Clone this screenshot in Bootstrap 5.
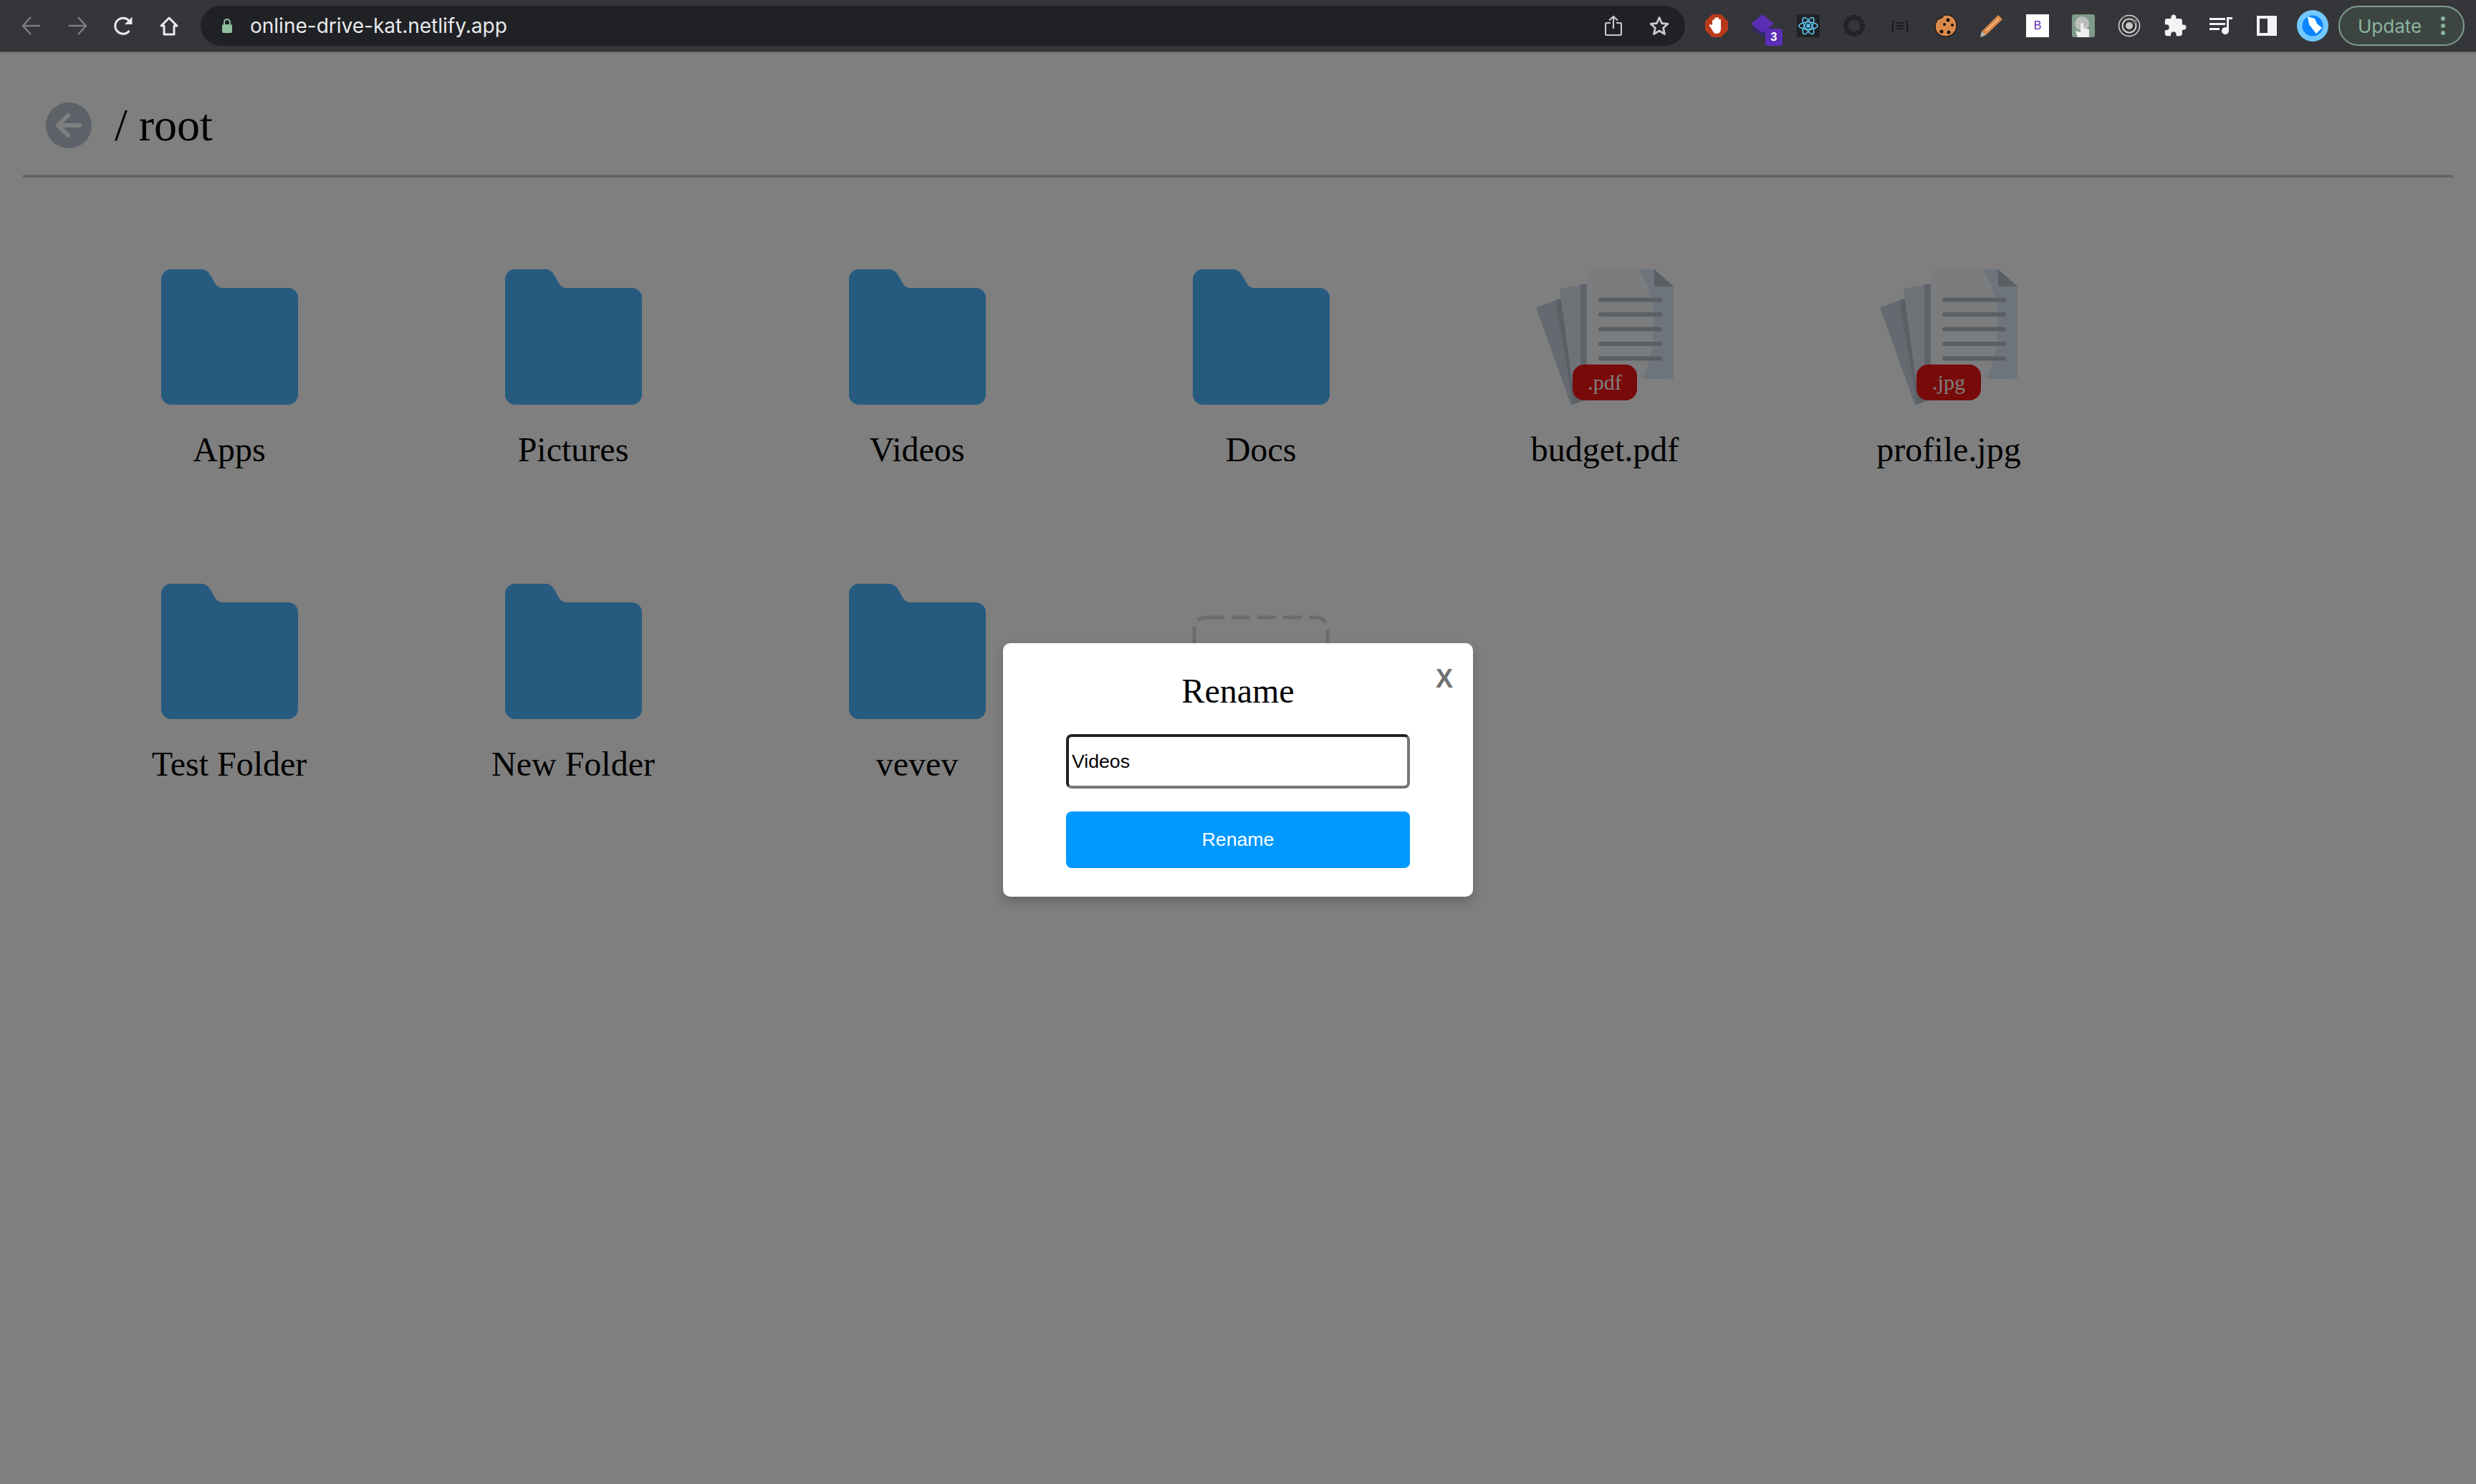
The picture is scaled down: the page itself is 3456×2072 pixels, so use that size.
<!DOCTYPE html>
<html lang="en">
<head>
  <meta charset="UTF-8" />
  <meta name="viewport" content="width=device-width, initial-scale=1.0"/>
  <title>Online Drive</title>
  <link href="https://cdn.jsdelivr.net/npm/bootstrap@5.3.3/dist/css/bootstrap.min.css" rel="stylesheet" />
  <style>
    html, body { height: 100%; }
    body { background: #fff; color: #000; font-family: "Liberation Serif", serif; overflow: hidden; }

    /* browser chrome */
    .chrome-bar { height: 74px; background: #35363a; border-bottom: 2px solid #6a6b6c; padding-left: 12px; padding-right: 16px; }
    .slot { width: 64px; height: 72px; flex: none; position: relative; }
    .slot-inner { height: 56px; }
    .address { flex: 1; height: 56px; margin: 0 12px; background: #202124; border-radius: 28px; padding-left: 29px; padding-right: 4px; }
    .url { font-family: Inter, sans-serif; font-size: 28px; color: #e8eaed; margin-left: 24px; }
    .ext-count { position: absolute; left: 36px; top: 40px; width: 24px; height: 24px; border-radius: 4px; background: #5b2db5; color: #fff; font: bold 16px/24px "Liberation Sans", sans-serif; text-align: center; }
    .ext-b { width: 32px; height: 32px; background: #fff; color: #5b2db5; font: 16px/32px "Liberation Sans", sans-serif; text-align: center; }
    .update-pill { width: 176px; height: 56px; margin-left: 4px; flex: none; border: 2px solid #7f9f8f; border-radius: 28px; background: #3c4542; color: #8ab59d; font: 26px Inter, sans-serif; padding-left: 25px; padding-right: 25px; }
    .dots { display: flex; flex-direction: column; gap: 4px; }
    .dots i { display: block; width: 6px; height: 6px; border-radius: 50%; background: #8ab59d; }

    /* page */
    .path-head { height: 174px; margin: 0 32px; padding: 69px 0 0 32px; border-bottom: 4px solid #ccc; gap: 32px; }
    .back-btn { width: 64px; height: 64px; flex: none; }
    .path-text { font-size: 64px; line-height: 64px; }
    .drive-grid { display: grid; grid-template-columns: repeat(6, 480px); grid-auto-rows: 439px; margin: 128px 0 0 80px; }
    .drive-item { position: relative; }
    .drive-icon { display: block; width: 192px; height: 190px; }
    .drive-name { font-size: 48px; line-height: 56px; margin-top: 34px; }
    .ext-tag { position: absolute; left: 195px; top: 133px; width: 90px; height: 50px; border-radius: 16px; background: #f01414; color: #fff; font-size: 30px; line-height: 50px; text-align: center; }

    /* modal */
    .dim-layer { position: absolute; left: 0; right: 0; top: 74px; bottom: 0; background: rgba(0, 0, 0, .5); padding-top: 4px; }
    .rename-box { position: relative; width: 656px; height: 354px; background: #fff; border-radius: 10px; padding: 0 88px; box-shadow: 0 8px 16px rgba(0, 0, 0, .2); }
    .rename-title { font-size: 48px; line-height: 56px; margin: 39px 0 32px; font-weight: 400; }
    .rename-input { display: block; width: 100%; height: 76px; padding: 0 4px; font: 26.67px "Liberation Sans", sans-serif; color: #000; border: 4px solid; border-color: #222 #767676 #767676 #222; border-radius: 8px; outline: none; }
    .rename-btn { display: block; width: 100%; height: 79px; margin-top: 32px; background: #09f; color: #fff; border: 0; border-radius: 8px; font: 26.67px "Liberation Sans", sans-serif; }
    .rename-close { position: absolute; top: 28px; right: 28px; font: bold 36px/44px "Liberation Sans", sans-serif; color: #707070; }
  </style>
</head>
<body>

  <!-- hidden icon defs -->
  <svg width="0" height="0" class="position-absolute">
    <symbol id="folder" viewBox="-1 0 192 190">
      <path fill="#4cb6ff" d="M14 0H56C64 0 67 5 71 12 75 20 78 26 86 26H177A14 14 0 0 1 191 40V175A14 14 0 0 1 177 189H14A14 14 0 0 1 0 175V14A14 14 0 0 1 14 0Z"/>
    </symbol>
    <symbol id="docs" viewBox="0 0 192 190">
      <path fill="#c9d4df" d="M0 53 35 41 72 182 49 190Z"/>
      <path fill="#b4bec8" d="M27 43 35 41 60 185 52 187Z"/>
      <path fill="#dde6f0" d="M33 27 71 20V160L52 170Z"/>
      <path fill="#bcc8d4" d="M62 21 71 20V160H62Z"/>
      <path fill="#dde8f6" d="M71 3A3 3 0 0 1 74 0H165L192 24V150A3 3 0 0 1 189 153H74A3 3 0 0 1 71 150Z"/>
      <path fill="#f6f8fb" d="M71 3A3 3 0 0 1 74 0H142C158 20 168 50 164 90 162 115 158 135 149 153H74A3 3 0 0 1 71 150Z"/>
      <path fill="#b4bec8" d="M165 0 192 24H165Z"/>
      <g fill="#b4bec8">
        <rect x="87" y="39.500" width="89" height="6" rx="3"/>
        <rect x="87" y="60" width="89" height="6" rx="3"/>
        <rect x="87" y="80.500" width="89" height="6" rx="3"/>
        <rect x="87" y="101" width="89" height="6" rx="3"/>
        <rect x="87" y="121.500" width="89" height="6" rx="3"/>
      </g>
    </symbol>
  </svg>

  <!-- Browser toolbar -->
  <div class="chrome-bar d-flex align-items-start">
    <div class="slot d-flex align-items-center justify-content-center">
      <svg width="28" height="28" viewBox="0 0 28 28" fill="none" stroke="#7c7d80" stroke-width="2.500"><path d="M26 14H3M13 2 2 14l11 12"/></svg>
    </div>
    <div class="slot d-flex align-items-center justify-content-center">
      <svg width="28" height="28" viewBox="0 0 28 28" fill="none" stroke="#7c7d80" stroke-width="2.500"><path d="M2 14h23M15 2l11 12-11 12"/></svg>
    </div>
    <div class="slot d-flex align-items-center justify-content-center">
      <svg width="28" height="28" viewBox="0 0 28 28" fill="none" stroke="#e8eaed" stroke-width="3"><path d="M22.500 21a11 11 0 1 1 1-12"/><path fill="#e8eaed" stroke="none" d="M26.500 1.500V12H16Z"/></svg>
    </div>
    <div class="slot d-flex align-items-center justify-content-center">
      <svg width="28" height="28" viewBox="0 0 28 28" fill="none" stroke="#e8eaed" stroke-width="3"><path d="M14 3 3 14h4v12h14V14h4Z" stroke-linejoin="round"/></svg>
    </div>

    <div class="address d-flex align-items-center mt-2">
      <svg width="16" height="20" viewBox="0 0 16 20"><path fill="none" stroke="#8fbfa0" stroke-width="2" d="M4 9V5a4 4 0 0 1 8 0v4"/><rect x="1" y="8" width="14" height="12" rx="2" fill="#8fbfa0"/></svg>
      <span class="url flex-grow-1">online-drive-kat.netlify.app</span>
      <div class="d-flex">
        <div class="slot slot-inner d-flex align-items-center justify-content-center">
          <svg width="24" height="30" viewBox="0 0 24 30" fill="none" stroke="#c8c9ca" stroke-width="2.200"><path d="M8 11H2.500A1.500 1.500 0 0 0 1 12.500v14A1.500 1.500 0 0 0 2.500 28h19a1.500 1.500 0 0 0 1.500-1.500v-14a1.500 1.500 0 0 0-1.500-1.500H16M12 19V2M6 7.500 12 2l6 5.500"/></svg>
        </div>
        <div class="slot slot-inner d-flex align-items-center justify-content-center">
          <svg width="30" height="30" viewBox="0 0 30 30" fill="none" stroke="#c8c9ca" stroke-width="2.800"><path d="M15 3.500 18.500 11.500 27 12.300 20.600 18 22.500 26.500 15 22 7.500 26.500 9.400 18 3 12.300 11.500 11.500Z" stroke-linejoin="round"/></svg>
        </div>
      </div>
    </div>

    <div class="slot d-flex align-items-center justify-content-center">
      <svg width="32" height="32" viewBox="0 0 32 32"><path fill="#b93a1a" d="M10 0H22L32 10V22L22 32H10L0 22V10Z"/><path fill="#fff" d="M10 14V9a1.500 1.500 0 0 1 3 0V6a1.500 1.500 0 0 1 3 0V5.500a1.500 1.500 0 0 1 3 0V8a1.500 1.500 0 0 1 3 0V20c0 4-2 7-6 7-3 0-5-2-6-5L6 16c-1-2 2-3 3-1Z"/></svg>
    </div>
    <div class="slot d-flex align-items-center justify-content-center">
      <svg width="32" height="32" viewBox="0 0 32 32"><path fill="#332a66" d="M0 20 16 8 32 20 16 32Z"/><path fill="#5b2db5" d="M0 13 16 0 32 13 16 26Z"/></svg>
      <span class="ext-count">3</span>
    </div>
    <div class="slot d-flex align-items-center justify-content-center">
      <svg width="32" height="32" viewBox="0 0 32 32" fill="none" stroke="#61c8f5" stroke-width="1.500"><rect width="32" height="32" rx="2" fill="#202124" stroke="none"/><ellipse cx="16" cy="16" rx="13" ry="5"/><ellipse cx="16" cy="16" rx="13" ry="5" transform="rotate(60 16 16)"/><ellipse cx="16" cy="16" rx="13" ry="5" transform="rotate(120 16 16)"/><rect x="13.500" y="13.500" width="5" height="5" fill="#61c8f5" stroke="none"/></svg>
    </div>
    <div class="slot d-flex align-items-center justify-content-center">
      <svg width="32" height="32" viewBox="0 0 32 32" fill="none" stroke="#111" stroke-width="7"><circle cx="16" cy="16" r="11.500" stroke-dasharray="1.400 1.610"/></svg>
    </div>
    <div class="slot d-flex align-items-center justify-content-center">
      <svg width="26" height="18" viewBox="0 0 26 18"><text x="0" y="15" font-family="Liberation Sans, sans-serif" font-size="18" fill="#111">{</text><text x="20" y="15" font-family="Liberation Sans, sans-serif" font-size="18" fill="#111">}</text><path stroke="#111" stroke-width="1.500" d="M8 5h10M8 9h10M8 13h10"/></svg>
    </div>
    <div class="slot d-flex align-items-center justify-content-center">
      <svg width="32" height="32" viewBox="0 0 32 32"><path fill="#d98a4a" stroke="#111" stroke-width="1.200" d="M13 1.500C11 6 7 6 5 7 3 10 1 12 1 17c0 8 6 14 15 14s15-7 15-15C31 7 25 1 17 1c-1 0-3 0-4 .5Z"/><g fill="#111"><circle cx="19" cy="8" r="2.500"/><circle cx="25" cy="15" r="2"/><circle cx="14" cy="14" r="2"/><circle cx="10" cy="24" r="2.500"/><circle cx="20" cy="25" r="2.500"/></g></svg>
    </div>
    <div class="slot d-flex align-items-center justify-content-center">
      <svg width="32" height="32" viewBox="0 0 32 32"><path fill="#e08a45" d="M25 1 31 7 8 29 2 24Z"/><path fill="#bbb" d="M2 24 8 29 0 32Z"/><path stroke="#fff" stroke-width="1" d="M8 23 26 6"/></svg>
    </div>
    <div class="slot d-flex align-items-center justify-content-center">
      <div class="ext-b">B</div>
    </div>
    <div class="slot d-flex align-items-center justify-content-center">
      <svg width="32" height="32" viewBox="0 0 32 32"><rect width="32" height="32" rx="3" fill="#7f9a8a"/><circle cx="14" cy="13" r="10" fill="#bdbdbd"/><path fill="#eee" d="M12 14a2 2 0 0 1 4 0v5l8 2v11H8l-3-9 7 2Z"/></svg>
    </div>
    <div class="slot d-flex align-items-center justify-content-center">
      <svg width="32" height="32" viewBox="0 0 32 32" fill="none" stroke="#d8d8d8" stroke-width="1.500"><circle cx="16" cy="16" r="14.500"/><circle cx="16" cy="16" r="9.500" stroke-width="2"/><circle cx="16" cy="16" r="5" fill="#c8c8c8" stroke="none"/><circle cx="24" cy="10" r="3" fill="#777" stroke="none"/><circle cx="8" cy="4" r="2" fill="#777" stroke="none"/></svg>
    </div>
    <div class="slot d-flex align-items-center justify-content-center">
      <svg width="34" height="34" viewBox="0 0 24 24"><path fill="#f1f3f4" d="M20.500 11H19V7c0-1.100-.9-2-2-2h-4V3.500C13 2.120 11.880 1 10.500 1S8 2.120 8 3.500V5H4c-1.100 0-1.990.9-1.990 2v3.800H3.500c1.490 0 2.700 1.210 2.700 2.700s-1.210 2.700-2.700 2.700H2V20c0 1.100.9 2 2 2h3.800v-1.500c0-1.490 1.210-2.700 2.700-2.700 1.490 0 2.700 1.210 2.700 2.700V22H17c1.100 0 2-.9 2-2v-4h1.500c1.380 0 2.500-1.120 2.500-2.500S21.880 11 20.500 11z"/></svg>
    </div>
    <div class="slot d-flex align-items-center justify-content-center">
      <svg width="32" height="24" viewBox="0 0 32 24" fill="#f1f3f4"><rect y="1" width="22" height="3"/><rect y="8" width="22" height="3"/><rect y="15" width="14" height="3"/><path d="M24 0h8v3h-5v16a5 5 0 1 1-3-4.500Z"/></svg>
    </div>
    <div class="slot d-flex align-items-center justify-content-center">
      <svg width="28" height="28" viewBox="0 0 28 28"><rect width="28" height="28" fill="#f1f3f4"/><rect x="4" y="4" width="11" height="20" fill="#35363a"/></svg>
    </div>
    <div class="slot d-flex align-items-center justify-content-center">
      <svg width="44" height="44" viewBox="0 0 44 44"><circle cx="22" cy="22" r="22" fill="#72c8ff"/><circle cx="22" cy="22" r="14.500" fill="#0a84ff"/><path fill="#fff" d="M15 9 25 12 28 19 35 25 27 33 20 24 17 20Z"/></svg>
    </div>

    <div class="update-pill d-flex align-items-center justify-content-between mt-2">
      <span>Update</span>
      <span class="dots"><i></i><i></i><i></i></span>
    </div>
  </div>

  <!-- Path header -->
  <div class="path-head d-flex align-items-start">
    <svg class="back-btn" viewBox="0 0 64 64"><circle cx="32" cy="32" r="32" fill="#b8c4d0"/><path fill="none" stroke="#fff" stroke-width="6" stroke-linecap="round" stroke-linejoin="round" d="M47 32H18M31 18 17 32l14 14"/></svg>
    <div class="path-text">/ root</div>
  </div>

  <!-- Files and folders -->
  <div class="drive-grid text-center">
    <div class="drive-item"><svg class="drive-icon mx-auto"><use href="#folder"/></svg><div class="drive-name">Apps</div></div>
    <div class="drive-item"><svg class="drive-icon mx-auto"><use href="#folder"/></svg><div class="drive-name">Pictures</div></div>
    <div class="drive-item"><svg class="drive-icon mx-auto"><use href="#folder"/></svg><div class="drive-name">Videos</div></div>
    <div class="drive-item"><svg class="drive-icon mx-auto"><use href="#folder"/></svg><div class="drive-name">Docs</div></div>
    <div class="drive-item"><svg class="drive-icon mx-auto"><use href="#docs"/></svg><span class="ext-tag">.pdf</span><div class="drive-name">budget.pdf</div></div>
    <div class="drive-item"><svg class="drive-icon mx-auto"><use href="#docs"/></svg><span class="ext-tag">.jpg</span><div class="drive-name">profile.jpg</div></div>
    <div class="drive-item"><svg class="drive-icon mx-auto"><use href="#folder"/></svg><div class="drive-name">Test Folder</div></div>
    <div class="drive-item"><svg class="drive-icon mx-auto"><use href="#folder"/></svg><div class="drive-name">New Folder</div></div>
    <div class="drive-item"><svg class="drive-icon mx-auto"><use href="#folder"/></svg><div class="drive-name">vevev</div></div>
    <div class="drive-item">
      <svg class="drive-icon mx-auto" viewBox="0 0 192 190" fill="none" stroke="#d2dae2" stroke-width="5" stroke-dasharray="26 10"><rect x="3" y="47" width="186" height="140" rx="16"/></svg>
    </div>
  </div>

  <!-- Rename modal -->
  <div class="dim-layer d-flex align-items-center justify-content-center">
    <div class="rename-box text-center">
      <span class="rename-close">X</span>
      <h2 class="rename-title">Rename</h2>
      <input class="rename-input" type="text" value="Videos" />
      <button class="rename-btn" type="button">Rename</button>
    </div>
  </div>

  <script src="https://cdn.jsdelivr.net/npm/bootstrap@5.3.3/dist/js/bootstrap.bundle.min.js"></script>
</body>
</html>
